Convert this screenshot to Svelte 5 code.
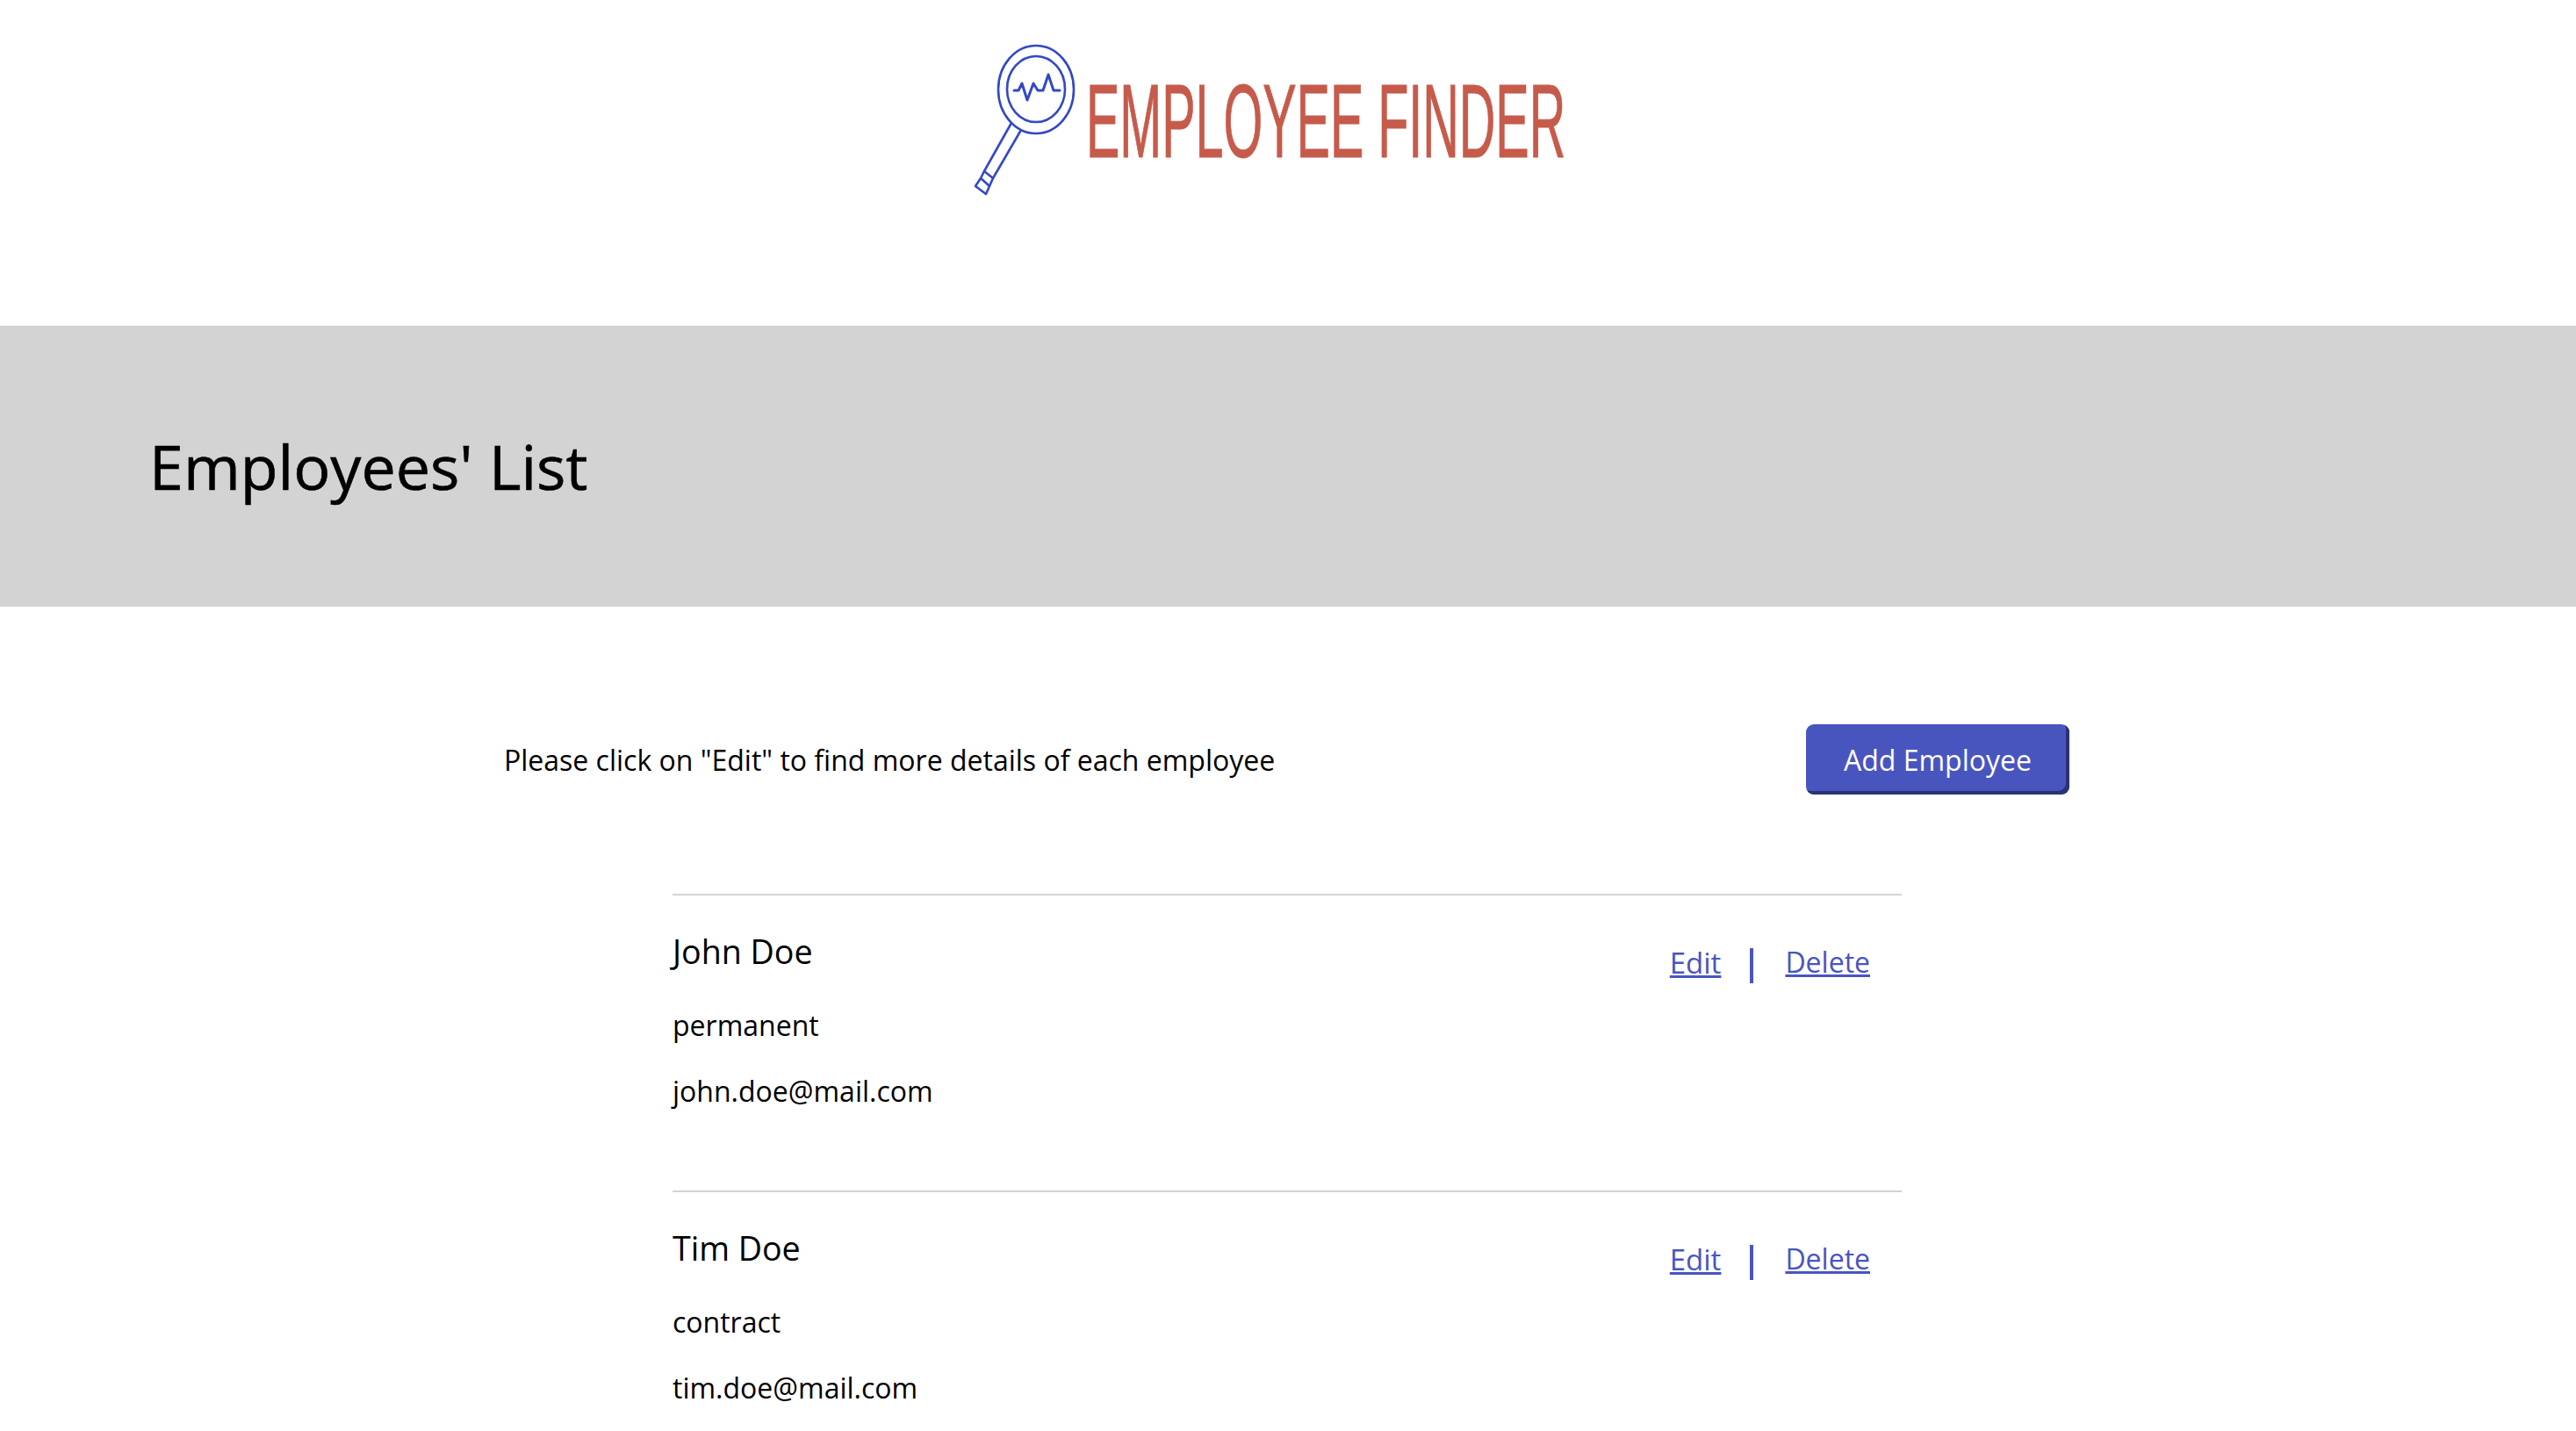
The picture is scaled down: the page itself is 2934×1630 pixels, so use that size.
<script>
	let employees = [
		{ name: 'John Doe', type: 'permanent', email: 'john.doe@mail.com' },
		{ name: 'Tim Doe', type: 'contract', email: 'tim.doe@mail.com' }
	];
</script>

<header class="logo-bar">
	<div class="logo">
		<svg class="mark" viewBox="0 0 150 190" width="150" height="190" fill="none" stroke="#3349c4" stroke-width="2.6">
			<ellipse cx="90" cy="62" rx="43" ry="50" />
			<ellipse cx="90" cy="61.5" rx="33" ry="37.5" />
			<path d="M65 63h5l4-8 6 19 7-19 5 8h6l6-18 6 18h7" stroke-width="3" stroke-linejoin="round" stroke-linecap="round" />
			<path d="M62 100 L31 155 L41 163 L73 108" stroke-linejoin="round" />
			<path d="M31 155 L27 163 L37 172 L41 163" stroke-linejoin="round" />
			<path d="M27 163 L21 172 L33 181 L37 172" stroke-linejoin="round" />
		</svg>
		<span class="wordmark"><span>EMPLOYEE FINDER</span></span>
	</div>
</header>

<section class="band">
	<h1>Employees' List</h1>
</section>

<main>
	<div class="intro">
		<p>Please click on "Edit" to find more details of each employee</p>
		<button>Add Employee</button>
	</div>

	<ul>
		{#each employees as emp}
			<li>
				<div class="info">
					<h2>{emp.name}</h2>
					<p>{emp.type}</p>
					<p>{emp.email}</p>
				</div>
				<div class="actions">
					<a href="#edit">Edit</a>
					<span class="sep"></span>
					<a href="#delete">Delete</a>
				</div>
			</li>
		{/each}
	</ul>
</main>

<style>
	:global(body) {
		margin: 0;
		background: #fff;
		color: #000;
		font-family: 'Open Sans', sans-serif;
	}
	.logo-bar {
		height: 371px;
		display: flex;
		justify-content: center;
		box-sizing: border-box;
		padding-top: 40px;
	}
	.logo {
		display: flex;
		align-items: flex-start;
	}
	.mark {
		display: block;
	}
	.wordmark {
		display: block;
		width: 604px;
		height: 100px;
		margin-top: 48px;
	}
	.wordmark span {
		display: inline-block;
		font-family: 'Liberation Sans', sans-serif;
		font-size: 119px;
		line-height: 100px;
		color: #c65b4b;
		white-space: nowrap;
		transform: translateX(-3px) scaleX(0.483);
		transform-origin: left center;
		-webkit-text-stroke: 1px #c65b4b;
	}
	.band {
		height: 320px;
		background: #d3d3d3;
		display: flex;
		align-items: center;
		padding-left: 170px;
	}
	h1 {
		margin: 0;
		font-size: 70px;
		font-weight: 400;
		-webkit-text-stroke: 0.6px #000;
	}
	main {
		width: 1783px;
		margin-left: 574px;
	}
	.intro {
		display: flex;
		justify-content: space-between;
		align-items: center;
		margin-top: 134px;
		font-size: 32px;
	}
	.intro p {
		margin: 0;
	}
	button {
		width: 300px;
		height: 80px;
		background: #4955bf;
		color: #fff;
		border: none;
		box-shadow: inset -4px -4px 0 #2a3272;
		border-radius: 9px;
		font: inherit;
		padding: 0;
	}
	ul {
		list-style: none;
		margin: 113px 0 0 192px;
		padding: 0;
		width: 1400px;
	}
	li {
		border-top: 2px solid #d3d3d3;
		height: 336px;
		display: flex;
		justify-content: space-between;
		align-items: flex-start;
		font-size: 32px;
	}
	.info h2 {
		margin: 39px 0 0;
		font-size: 37.6px;
		font-weight: 400;
		line-height: 50px;
	}
	.info p {
		margin: 0;
		line-height: 44px;
		margin-top: 31px;
	}
	.info h2 + p {
		margin-top: 37px;
	}
	.actions {
		display: flex;
		align-items: flex-start;
		gap: 36px;
		margin-top: 54px;
		margin-right: 36px;
	}
	.actions a {
		color: #4955bf;
		text-decoration: underline;
		text-decoration-thickness: 3px;
	}
	.actions a:first-child {
		font-size: 33px;
		margin-right: -3px;
	}
	.sep {
		width: 4px;
		height: 40px;
		margin-top: 6px;
		background: #4955bf;
	}
</style>
